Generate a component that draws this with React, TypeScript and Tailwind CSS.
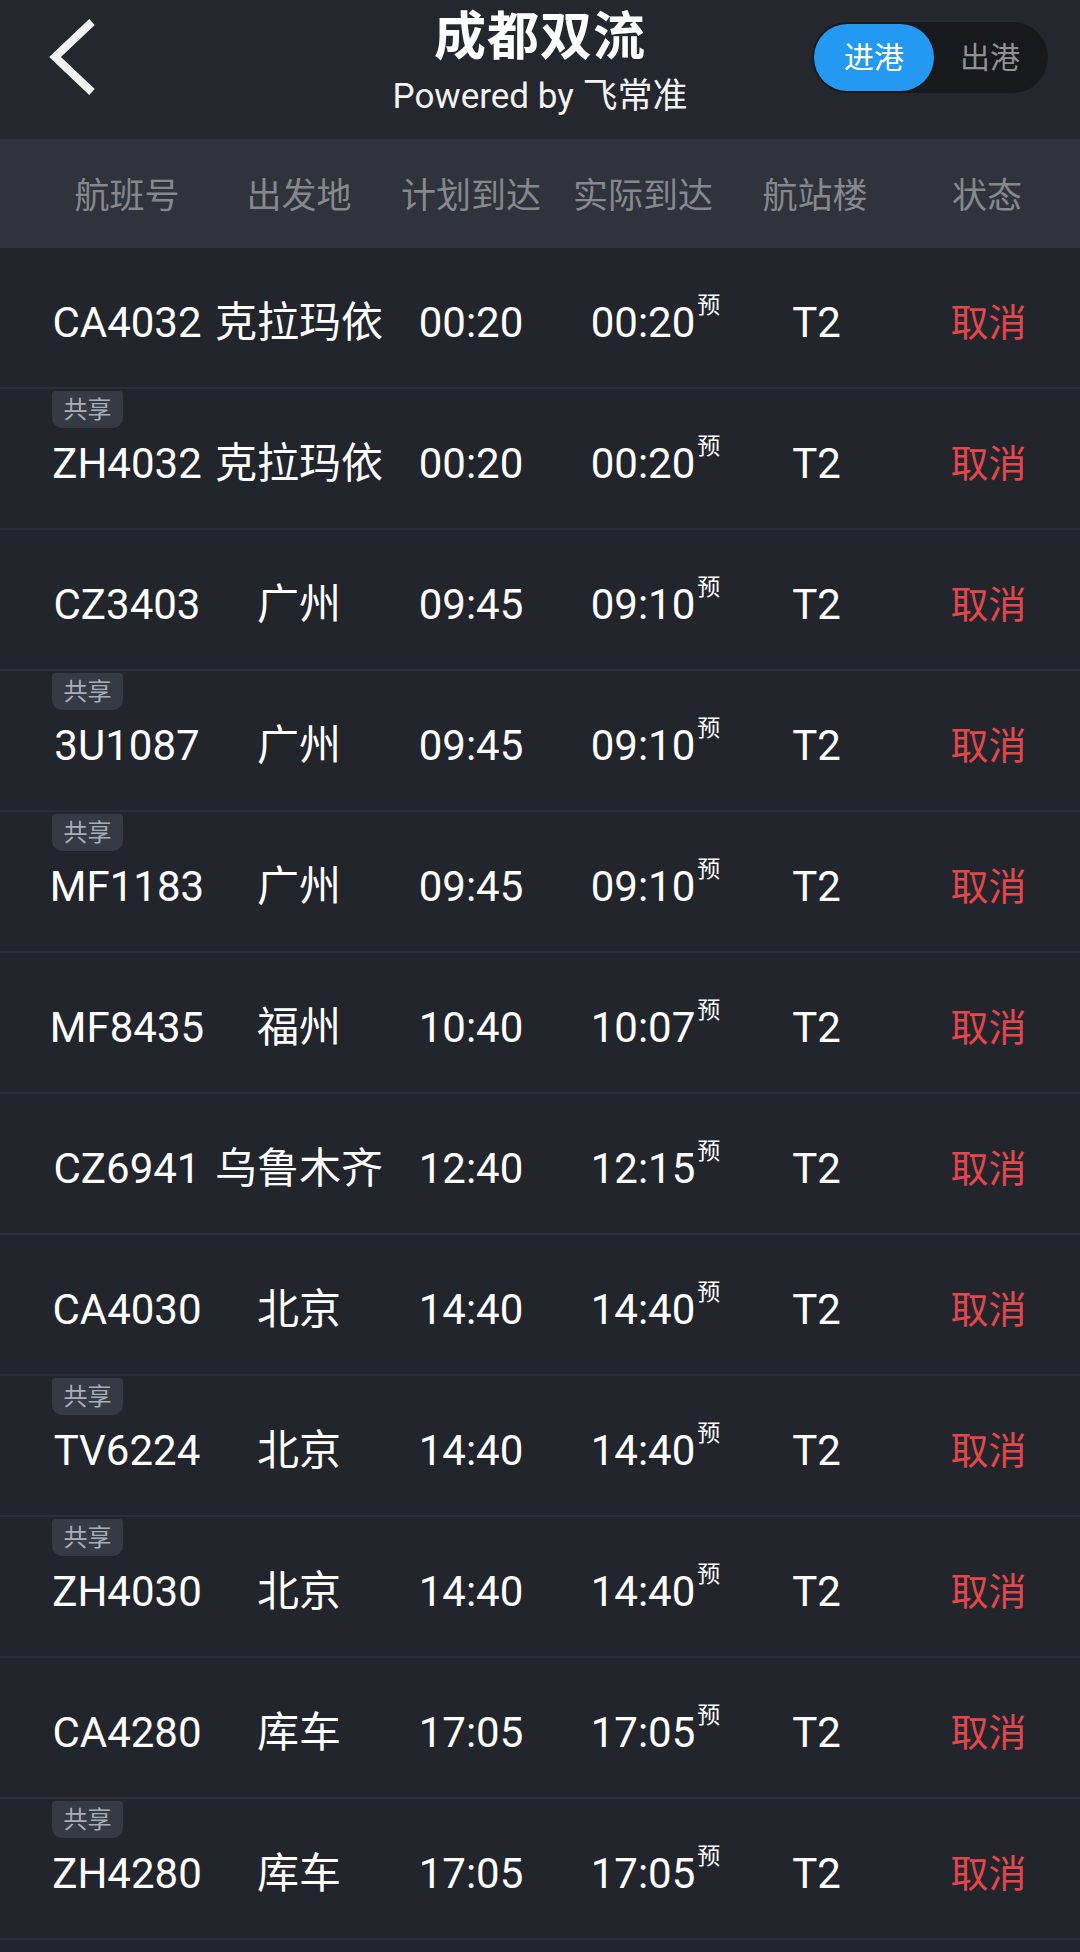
import React from 'react';

type Row = { no: string; from: string; plan: string; act: string; share: boolean };

const rows: Row[] = [
  { no: 'CA4032', from: '克拉玛依', plan: '00:20', act: '00:20', share: false },
  { no: 'ZH4032', from: '克拉玛依', plan: '00:20', act: '00:20', share: true },
  { no: 'CZ3403', from: '广州', plan: '09:45', act: '09:10', share: false },
  { no: '3U1087', from: '广州', plan: '09:45', act: '09:10', share: true },
  { no: 'MF1183', from: '广州', plan: '09:45', act: '09:10', share: true },
  { no: 'MF8435', from: '福州', plan: '10:40', act: '10:07', share: false },
  { no: 'CZ6941', from: '乌鲁木齐', plan: '12:40', act: '12:15', share: false },
  { no: 'CA4030', from: '北京', plan: '14:40', act: '14:40', share: false },
  { no: 'TV6224', from: '北京', plan: '14:40', act: '14:40', share: true },
  { no: 'ZH4030', from: '北京', plan: '14:40', act: '14:40', share: true },
  { no: 'CA4280', from: '库车', plan: '17:05', act: '17:05', share: false },
  { no: 'ZH4280', from: '库车', plan: '17:05', act: '17:05', share: true },
];

const headers = ['航班号', '出发地', '计划到达', '实际到达', '航站楼', '状态'];

export default function App() {
  return (
    <div className="min-h-[1952px] w-[1080px] bg-[#22252c] font-[Roboto,'Noto_Sans_CJK_SC',sans-serif] text-white">
      {/* Top bar */}
      <div className="grid h-[139px] grid-cols-[1fr_auto_1fr] bg-[#24272e]">
        <div className="flex items-start">
          <svg width="60" height="84" viewBox="0 0 60 84" className="ml-[44px] mt-[15px]">
            <polyline
              points="48,7 11,42 48,77"
              fill="none"
              stroke="#f2f2f2"
              strokeWidth="8"
              strokeLinecap="butt"
              strokeLinejoin="miter"
            />
          </svg>
        </div>
        <div className="flex flex-col items-center pt-[7px]">
          <div className="text-[52px] font-bold leading-[62px] tracking-[1px]">成都双流</div>
          <div className="mt-[9px] text-[35px] leading-[38px] text-[#f4f4f4]">Powered by 飞常准</div>
        </div>
        <div className="flex items-start justify-end">
          <div className="mr-[32px] mt-[22px] flex h-[71px] w-[236px] rounded-full bg-[#17191d] p-[2px]">
            <div className="flex w-[120px] items-center justify-center rounded-full bg-[#2499f2] text-[30px] leading-none text-white">
              进港
            </div>
            <div className="flex flex-1 items-center justify-center text-[30px] leading-none text-[#8f9196]">
              出港
            </div>
          </div>
        </div>
      </div>

      {/* Table header */}
      <div className="grid h-[109px] grid-cols-[repeat(6,172px)] items-center bg-[#30333b] pl-[41px] pt-[5px]">
        {headers.map((h) => (
          <div key={h} className="text-center text-[35px] leading-none text-[#86888e]">
            {h}
          </div>
        ))}
      </div>

      {/* Rows */}
      {rows.map((r) => (
        <div
          key={r.no}
          className="relative grid h-[141px] grid-cols-[repeat(6,172px)] items-center border-b-2 border-[#2c2f37] pl-[41px] pt-[10px] text-[42px] leading-none"
        >
          {r.share && (
            <div className="absolute left-[52px] top-[2px] flex h-[37px] w-[71px] items-center justify-center rounded-b-[10px] rounded-t-[4px] bg-[#363a45] text-[24px] leading-none text-[#a9adb9]">
              共享
            </div>
          )}
          <div className="text-center">{r.no}</div>
          <div className="text-center">{r.from}</div>
          <div className="text-center">{r.plan}</div>
          <div className="flex justify-center">
            <span className="relative">
              {r.act}
              <span className="absolute left-full top-[-8px] ml-[2px] text-[23px] leading-none">预</span>
            </span>
          </div>
          <div className="pl-[3px] text-center">T2</div>
          <div className="pl-[3px] text-center text-[38px] text-[#e4474b]">取消</div>
        </div>
      ))}
    </div>
  );
}
